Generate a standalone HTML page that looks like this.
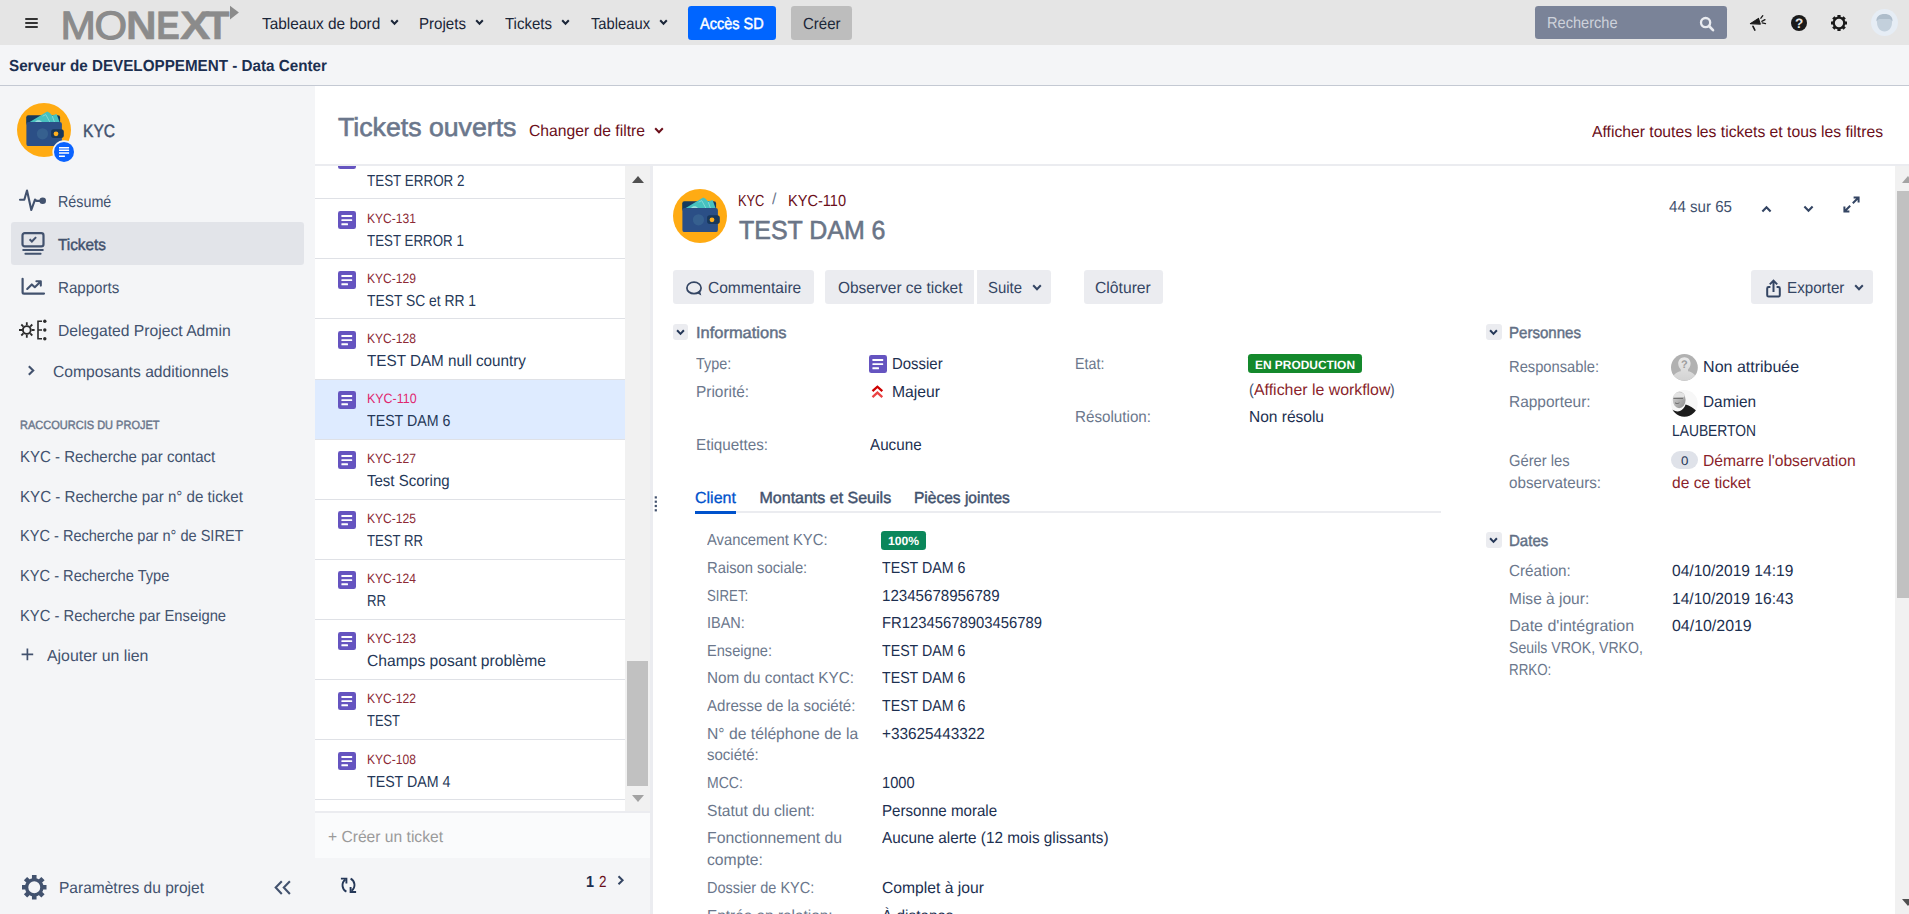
<!DOCTYPE html>
<html lang="fr">
<head>
<meta charset="utf-8">
<title>[KYC-110] TEST DAM 6 - Tickets ouverts</title>
<style>
*{box-sizing:border-box}
html,body{margin:0;padding:0}
body{width:1909px;height:914px;overflow:hidden;background:#fff;font-family:"Liberation Sans",sans-serif;position:relative;color:#172b4d;text-rendering:geometricPrecision}
.t{position:absolute;white-space:nowrap;display:block;transform-origin:0 50%}
.abs,.ti,svg.i{position:absolute}
svg{display:block;overflow:visible}
#hdr{position:absolute;left:0;top:0;width:1909px;height:45px;background:#e5e5e5}
#banner{position:absolute;left:0;top:45px;width:1909px;height:41px;background:#f4f5f7;border-bottom:1px solid #c4c9d3}
#side{position:absolute;left:0;top:86px;width:315px;height:828px;background:#f4f5f7}
.btnp{position:absolute;top:6px;height:33.5px;border-radius:3.3px}
.b{position:absolute;top:270px;height:33.7px;background:#ebecf0;border-radius:3.3px}
.tg{position:absolute;width:15.5px;height:16px;background:#ebecf0;border-radius:3px}
#list{position:absolute;left:315px;top:166px;width:310px;height:645.5px;overflow:hidden;background:#fff}
#list .row{position:absolute;left:0;width:310px;height:60.1px;border-top:1px solid #dfe1e6}
#list .row.sel{background:#deebff}
.loz{position:absolute;border-radius:3.3px}
</style>
</head>
<body>

<header id="hdr">
  <!-- hamburger -->
  <div class="abs" style="left:24.6px;top:17.5px;width:13.8px;height:2px;background:#333;border-radius:1px"></div>
  <div class="abs" style="left:24.6px;top:21.9px;width:13.8px;height:2px;background:#333;border-radius:1px"></div>
  <div class="abs" style="left:24.6px;top:26.4px;width:13.8px;height:2px;background:#333;border-radius:1px"></div>
  <!-- logo -->
  <svg class="i" style="left:60px;top:0" width="185" height="45" viewBox="60 0 185 45" font-family="Liberation Sans, sans-serif" font-size="39.6" fill="#8b8b8b" stroke="#8b8b8b" stroke-linejoin="miter">
    <text x="60.4" y="39" stroke-width="1.1" textLength="35.4" lengthAdjust="spacingAndGlyphs">M</text>
    <text x="94.6" y="39.3" stroke-width="1.1" textLength="32.6" lengthAdjust="spacingAndGlyphs">O</text>
    <g font-weight="700" stroke-width=".5">
    <text x="126" y="39" textLength="30.6" lengthAdjust="spacingAndGlyphs">N</text>
    <text x="156.2" y="39" textLength="23.6" lengthAdjust="spacingAndGlyphs">E</text>
    <text x="180" y="39" textLength="30.4" lengthAdjust="spacingAndGlyphs">X</text>
    <text x="205.4" y="39" textLength="24" lengthAdjust="spacingAndGlyphs">T</text>
    </g>
    <polygon points="230,5.8 238.9,12.6 230,19.5" stroke="none"/>
  </svg>
  <!-- nav chevrons -->
  <svg class="i" style="left:389.5px;top:18.6px" width="9" height="7" viewBox="0 0 9 7"><path d="M1.2 1.3 4.5 4.8 7.8 1.3" fill="none" stroke="#1b2638" stroke-width="2"/></svg>
  <svg class="i" style="left:475.2px;top:18.6px" width="9" height="7" viewBox="0 0 9 7"><path d="M1.2 1.3 4.5 4.8 7.8 1.3" fill="none" stroke="#1b2638" stroke-width="2"/></svg>
  <svg class="i" style="left:561px;top:18.6px" width="9" height="7" viewBox="0 0 9 7"><path d="M1.2 1.3 4.5 4.8 7.8 1.3" fill="none" stroke="#1b2638" stroke-width="2"/></svg>
  <svg class="i" style="left:659px;top:18.6px" width="9" height="7" viewBox="0 0 9 7"><path d="M1.2 1.3 4.5 4.8 7.8 1.3" fill="none" stroke="#1b2638" stroke-width="2"/></svg>
  <div class="btnp" style="left:688px;width:88px;background:#0065ff"></div>
  <div class="btnp" style="left:791px;width:61px;background:#bdbdbd"></div>
  <!-- search -->
  <div class="abs" style="left:1535px;top:6px;width:192px;height:33px;background:#7a8398;border-radius:3.3px"></div>
  <svg class="i" style="left:1699px;top:15.5px" width="16" height="16" viewBox="0 0 16 16"><circle cx="6.6" cy="6.6" r="4.6" fill="none" stroke="#e9ebf0" stroke-width="2.3"/><path d="M10 10l4 4.2" stroke="#e9ebf0" stroke-width="2.6" stroke-linecap="round"/></svg>
  <!-- megaphone -->
  <svg class="i" style="left:1749px;top:14px" width="19" height="18" viewBox="0 0 19 18"><path d="M1.400 9.600 9.500 4.400 11.300 10.100Z" fill="#1a1a1a" stroke="#1a1a1a" stroke-width="1.100" stroke-linejoin="round"/><path d="M4 12.300 5.800 16" stroke="#1a1a1a" stroke-width="1.700" stroke-linecap="round"/><path d="M11.900 4.200 13.800 1.700M12.800 7.300 16 5.700M13.200 8.800 16.500 9.600" stroke="#1a1a1a" stroke-width="1.300" stroke-linecap="round"/></svg>
  <!-- help -->
  <svg class="i" style="left:1790.800px;top:14.800px" width="16" height="16" viewBox="0 0 16 16"><circle cx="8" cy="8" r="8" fill="#1a1a1a"/><text x="8" y="12.7" text-anchor="middle" font-family="Liberation Sans, sans-serif" font-weight="700" font-size="13.5" fill="#e5e5e5">?</text></svg>
  <!-- gear -->
  <svg class="i" style="left:1831.200px;top:15px" width="16" height="16" viewBox="0 0 16 16"><circle cx="8" cy="8" r="5.300" fill="none" stroke="#1a1a1a" stroke-width="2.300"/><g stroke="#1a1a1a" stroke-width="3.200"><path d="M8 0v2.6M8 13.4V16M0 8h2.6M13.4 8H16M2.3 2.3l1.9 1.9M11.8 11.8l1.9 1.9M2.3 13.7l1.9-1.9M11.8 4.2l1.9-1.9"/></g></svg>
  <!-- avatar -->
  <svg class="i" style="left:1871px;top:8.6px" width="27" height="27" viewBox="0 0 27 27"><defs><clipPath id="avc"><circle cx="13.5" cy="13.5" r="13.5"/></clipPath></defs><circle cx="13.5" cy="13.5" r="13.5" fill="#e6edf5"/><g clip-path="url(#avc)"><path d="M6 13.5c0 5 3.2 9 7.5 9s7.500-4 7.500-9V10H6z" fill="#c3d0dc"/><path d="M5.500 12.500C5 7.500 8.500 5 13.500 5s8.500 2.500 8 7.500c-1-1.800-2-2.600-3-2.600H8.500c-1 0-2 .8-3 2.600z" fill="#aebdcb"/></g></svg>
</header>

<div id="banner"></div>

<aside id="side">
  <!-- project avatar -->
  <svg class="i" style="left:17px;top:16.800px" width="60" height="62" viewBox="0 0 60 62">
    <circle cx="27" cy="27" r="27" fill="#ffab13"/>
    <rect x="9.200" y="12.200" width="33.900" height="10" rx="2.200" fill="#173a5e"/>
    <path d="M12.300 19.200 30.200 8.400 32.600 9.800 35.200 12.400 39.600 11.100 42.600 19.200z" fill="#47c1bf"/>
    <path d="M18 19.200c1.400-2.400 5.400-2.600 7-.0z" fill="#9fe0dc"/>
    <path d="M25.600 13.200 28.800 11.600 32.800 19M35.200 12.800 37.400 19" fill="none" stroke="#8fdcd9" stroke-width=".8"/>
    <rect x="9.400" y="18.900" width="35.500" height="24.200" rx="2.200" fill="#2b4f86"/>
    <circle cx="25.500" cy="30.800" r="5.600" fill="#36608f"/>
    <rect x="34.100" y="26.300" width="12.700" height="8.600" rx="2.600" fill="#17375a"/>
    <circle cx="39" cy="30.800" r="2.400" fill="#ffb01f"/>
    <circle cx="47" cy="48.900" r="11.600" fill="#f4f5f7"/>
    <circle cx="47" cy="48.900" r="10" fill="#0a63ff"/>
    <g stroke="#fff" stroke-width="1.450"><path d="M42 44.650h10.100M42 47.300h10.100M42 50.050h10.100M42 53.150h5.900"/></g>
  </svg>
  <!-- selected item bg -->
  <div class="abs" style="left:11px;top:136px;width:293px;height:43px;background:#e2e4e9;border-radius:3.3px"></div>
  <!-- Résumé icon -->
  <svg class="i" style="left:19px;top:102.200px" width="28" height="25" viewBox="0 0 28 25"><path d="M1 11.800h4.300L8 2.500l4.300 19.500 3.700-10.400 1.700 1.300h3" fill="none" stroke="#42526e" stroke-width="2.100" stroke-linejoin="round" stroke-linecap="round"/><circle cx="23.700" cy="12.700" r="3.300" fill="#42526e"/></svg>
  <!-- Tickets icon -->
  <svg class="i" style="left:21px;top:146px" width="24" height="23" viewBox="0 0 24 23"><rect x="1.500" y="1.200" width="21" height="13.200" rx="2.200" fill="none" stroke="#42526e" stroke-width="2.200"/><path d="M8.600 7.200l2.300 2.300 4.200-4.400" fill="none" stroke="#42526e" stroke-width="2"/><path d="M2.200 18h19.600M4.400 21.800h15.200" stroke="#42526e" stroke-width="2" stroke-linecap="round"/></svg>
  <!-- Rapports icon -->
  <svg class="i" style="left:21px;top:192px" width="24" height="17" viewBox="0 0 24 17"><path d="M1.600 .8v13.400a1.400 1.400 0 0 0 1.400 1.400h20" fill="none" stroke="#42526e" stroke-width="2.200" stroke-linecap="round"/><path d="M6.200 11l4.600-4.600 3 2.800 5.600-5.400M15.400 3.200h4.400v4.400" fill="none" stroke="#42526e" stroke-width="2.100" stroke-linejoin="round" stroke-linecap="round"/></svg>
  <!-- Delegated icon -->
  <svg class="i" style="left:19px;top:233px" width="28" height="22" viewBox="0 0 28 22"><circle cx="7.800" cy="11" r="3.900" fill="none" stroke="#2b2b2b" stroke-width="1.900"/><g stroke="#2b2b2b" stroke-width="1.800"><path d="M7.800 3.200v3M7.800 15.800v3M0 11h3M12.600 11h3M2.300 5.500l2.100 2.100M11.200 14.400l2.100 2.100M2.300 16.500l2.100-2.100M11.200 7.600l2.100-2.100"/></g><path d="M23 2.200h-4v17.600h4M19 11h4" fill="none" stroke="#2b2b2b" stroke-width="1.600"/><circle cx="25.800" cy="2.200" r="1.700" fill="#2b2b2b"/><circle cx="25.800" cy="11" r="1.700" fill="#2b2b2b"/><circle cx="25.800" cy="19.800" r="1.700" fill="#2b2b2b"/></svg>
  <!-- chevron right -->
  <svg class="i" style="left:26.500px;top:279px" width="9" height="11" viewBox="0 0 9 11"><path d="M1.800 1.300 6.200 5.500 1.800 9.700" fill="none" stroke="#42526e" stroke-width="2.100"/></svg>
  <!-- plus -->
  <svg class="i" style="left:21px;top:561.500px" width="13" height="13" viewBox="0 0 13 13"><path d="M6.400 .6v11.600M.6 6.400h11.600" stroke="#42526e" stroke-width="1.700"/></svg>
  <!-- gear bottom -->
  <svg class="i" style="left:21.500px;top:788.500px" width="24.500" height="24.500" viewBox="0 0 16 16"><circle cx="8" cy="8" r="5" fill="none" stroke="#42526e" stroke-width="2.200"/><g stroke="#42526e" stroke-width="3"><path d="M8 0v2.600M8 13.400V16M0 8h2.600M13.400 8H16M2.300 2.300l1.900 1.900M11.800 11.800l1.900 1.900M2.300 13.700l1.900-1.900M11.800 4.200l1.900-1.900"/></g></svg>
  <!-- collapse -->
  <svg class="i" style="left:273.500px;top:793.500px" width="18" height="16" viewBox="0 0 18 16"><path d="M7.800 1.300 1.700 7.600l6.100 6.300M15.900 1.300 9.800 7.600l6.100 6.300" fill="none" stroke="#42526e" stroke-width="2.100"/></svg>
</aside>

<main>
  <!-- top border under heading -->
  <div class="abs" style="left:315px;top:164px;width:1594px;height:2px;background:#ebecf0"></div>
  <svg class="i" style="left:654px;top:126.600px" width="10" height="8" viewBox="0 0 10 8"><path d="M1.200 1.300 5 5.300 8.800 1.300" fill="none" stroke="#6b0f1a" stroke-width="2"/></svg>

  <section id="list">
<div class="row" style="top:-27.9px"></div>
<svg class="ti" style="left:23px;top:-15.3px" width="18" height="18" viewBox="0 0 18 18"><rect width="18" height="18" rx="2.3" fill="#6554c0"/><rect x="3.4" y="4.1" width="10.8" height="1.9" rx=".5" fill="#fff"/><rect x="3.4" y="8.2" width="10.8" height="1.9" rx=".5" fill="#fff"/><rect x="3.4" y="12.3" width="6.6" height="1.9" rx=".5" fill="#fff"/></svg>
<div class="row" style="top:32.2px"></div>
<svg class="ti" style="left:23px;top:44.8px" width="18" height="18" viewBox="0 0 18 18"><rect width="18" height="18" rx="2.3" fill="#6554c0"/><rect x="3.4" y="4.1" width="10.8" height="1.9" rx=".5" fill="#fff"/><rect x="3.4" y="8.2" width="10.8" height="1.9" rx=".5" fill="#fff"/><rect x="3.4" y="12.3" width="6.6" height="1.9" rx=".5" fill="#fff"/></svg>
<div class="row" style="top:92.3px"></div>
<svg class="ti" style="left:23px;top:104.9px" width="18" height="18" viewBox="0 0 18 18"><rect width="18" height="18" rx="2.3" fill="#6554c0"/><rect x="3.4" y="4.1" width="10.8" height="1.9" rx=".5" fill="#fff"/><rect x="3.4" y="8.2" width="10.8" height="1.9" rx=".5" fill="#fff"/><rect x="3.4" y="12.3" width="6.6" height="1.9" rx=".5" fill="#fff"/></svg>
<div class="row" style="top:152.4px"></div>
<svg class="ti" style="left:23px;top:165.0px" width="18" height="18" viewBox="0 0 18 18"><rect width="18" height="18" rx="2.3" fill="#6554c0"/><rect x="3.4" y="4.1" width="10.8" height="1.9" rx=".5" fill="#fff"/><rect x="3.4" y="8.2" width="10.8" height="1.9" rx=".5" fill="#fff"/><rect x="3.4" y="12.3" width="6.6" height="1.9" rx=".5" fill="#fff"/></svg>
<div class="row sel" style="top:212.5px"></div>
<svg class="ti" style="left:23px;top:225.1px" width="18" height="18" viewBox="0 0 18 18"><rect width="18" height="18" rx="2.3" fill="#6554c0"/><rect x="3.4" y="4.1" width="10.8" height="1.9" rx=".5" fill="#fff"/><rect x="3.4" y="8.2" width="10.8" height="1.9" rx=".5" fill="#fff"/><rect x="3.4" y="12.3" width="6.6" height="1.9" rx=".5" fill="#fff"/></svg>
<div class="row" style="top:272.6px"></div>
<svg class="ti" style="left:23px;top:285.2px" width="18" height="18" viewBox="0 0 18 18"><rect width="18" height="18" rx="2.3" fill="#6554c0"/><rect x="3.4" y="4.1" width="10.8" height="1.9" rx=".5" fill="#fff"/><rect x="3.4" y="8.2" width="10.8" height="1.9" rx=".5" fill="#fff"/><rect x="3.4" y="12.3" width="6.6" height="1.9" rx=".5" fill="#fff"/></svg>
<div class="row" style="top:332.7px"></div>
<svg class="ti" style="left:23px;top:345.3px" width="18" height="18" viewBox="0 0 18 18"><rect width="18" height="18" rx="2.3" fill="#6554c0"/><rect x="3.4" y="4.1" width="10.8" height="1.9" rx=".5" fill="#fff"/><rect x="3.4" y="8.2" width="10.8" height="1.9" rx=".5" fill="#fff"/><rect x="3.4" y="12.3" width="6.6" height="1.9" rx=".5" fill="#fff"/></svg>
<div class="row" style="top:392.8px"></div>
<svg class="ti" style="left:23px;top:405.4px" width="18" height="18" viewBox="0 0 18 18"><rect width="18" height="18" rx="2.3" fill="#6554c0"/><rect x="3.4" y="4.1" width="10.8" height="1.9" rx=".5" fill="#fff"/><rect x="3.4" y="8.2" width="10.8" height="1.9" rx=".5" fill="#fff"/><rect x="3.4" y="12.3" width="6.6" height="1.9" rx=".5" fill="#fff"/></svg>
<div class="row" style="top:452.9px"></div>
<svg class="ti" style="left:23px;top:465.5px" width="18" height="18" viewBox="0 0 18 18"><rect width="18" height="18" rx="2.3" fill="#6554c0"/><rect x="3.4" y="4.1" width="10.8" height="1.9" rx=".5" fill="#fff"/><rect x="3.4" y="8.2" width="10.8" height="1.9" rx=".5" fill="#fff"/><rect x="3.4" y="12.3" width="6.6" height="1.9" rx=".5" fill="#fff"/></svg>
<div class="row" style="top:513.0px"></div>
<svg class="ti" style="left:23px;top:525.6px" width="18" height="18" viewBox="0 0 18 18"><rect width="18" height="18" rx="2.3" fill="#6554c0"/><rect x="3.4" y="4.1" width="10.8" height="1.9" rx=".5" fill="#fff"/><rect x="3.4" y="8.2" width="10.8" height="1.9" rx=".5" fill="#fff"/><rect x="3.4" y="12.3" width="6.6" height="1.9" rx=".5" fill="#fff"/></svg>
<div class="row" style="top:573.1px"></div>
<svg class="ti" style="left:23px;top:585.7px" width="18" height="18" viewBox="0 0 18 18"><rect width="18" height="18" rx="2.3" fill="#6554c0"/><rect x="3.4" y="4.1" width="10.8" height="1.9" rx=".5" fill="#fff"/><rect x="3.4" y="8.2" width="10.8" height="1.9" rx=".5" fill="#fff"/><rect x="3.4" y="12.3" width="6.6" height="1.9" rx=".5" fill="#fff"/></svg>
<div class="row" style="top:633.2px"></div>
<svg class="ti" style="left:23px;top:645.8px" width="18" height="18" viewBox="0 0 18 18"><rect width="18" height="18" rx="2.3" fill="#6554c0"/><rect x="3.4" y="4.1" width="10.8" height="1.9" rx=".5" fill="#fff"/><rect x="3.4" y="8.2" width="10.8" height="1.9" rx=".5" fill="#fff"/><rect x="3.4" y="12.3" width="6.6" height="1.9" rx=".5" fill="#fff"/></svg>
<span class="t" style="left:52.2px;top:-16px;font-size:13.5px;line-height:17px;color:#8c2a35;transform:scaleX(0.8945)">KYC-132</span>
<span class="t" style="left:52.2px;top:6px;font-size:16px;line-height:19px;color:#253858;transform:scaleX(0.8393)">TEST ERROR 2</span>
<span class="t" style="left:52.2px;top:44px;font-size:13.5px;line-height:17px;color:#8c2a35;transform:scaleX(0.8945)">KYC-131</span>
<span class="t" style="left:52.2px;top:66px;font-size:16px;line-height:19px;color:#253858;transform:scaleX(0.8332)">TEST ERROR 1</span>
<span class="t" style="left:52.2px;top:104px;font-size:13.5px;line-height:17px;color:#8c2a35;transform:scaleX(0.8945)">KYC-129</span>
<span class="t" style="left:52.2px;top:126px;font-size:16px;line-height:19px;color:#253858;transform:scaleX(0.8653)">TEST SC et RR 1</span>
<span class="t" style="left:52.2px;top:164px;font-size:13.5px;line-height:17px;color:#8c2a35;transform:scaleX(0.8945)">KYC-128</span>
<span class="t" style="left:52.2px;top:186px;font-size:16px;line-height:19px;color:#253858;transform:scaleX(0.9528)">TEST DAM null country</span>
<span class="t" style="left:52.2px;top:224px;font-size:13.5px;line-height:17px;color:#e0266e;transform:scaleX(0.9223)">KYC-110</span>
<span class="t" style="left:52.2px;top:246px;font-size:16px;line-height:19px;color:#253858;transform:scaleX(0.8877)">TEST DAM 6</span>
<span class="t" style="left:52.2px;top:284px;font-size:13.5px;line-height:17px;color:#8c2a35;transform:scaleX(0.8945)">KYC-127</span>
<span class="t" style="left:52.2px;top:306px;font-size:16px;line-height:19px;color:#253858;transform:scaleX(0.9381)">Test Scoring</span>
<span class="t" style="left:52.2px;top:344px;font-size:13.5px;line-height:17px;color:#8c2a35;transform:scaleX(0.8945)">KYC-125</span>
<span class="t" style="left:52.2px;top:366px;font-size:16px;line-height:19px;color:#253858;transform:scaleX(0.8216)">TEST RR</span>
<span class="t" style="left:52.2px;top:404px;font-size:13.5px;line-height:17px;color:#8c2a35;transform:scaleX(0.8945)">KYC-124</span>
<span class="t" style="left:52.2px;top:426px;font-size:16px;line-height:19px;color:#253858;transform:scaleX(0.8222)">RR</span>
<span class="t" style="left:52.2px;top:464px;font-size:13.5px;line-height:17px;color:#8c2a35;transform:scaleX(0.8945)">KYC-123</span>
<span class="t" style="left:52.2px;top:486px;font-size:16px;line-height:19px;color:#253858;transform:scaleX(0.9770)">Champs posant problème</span>
<span class="t" style="left:52.2px;top:524px;font-size:13.5px;line-height:17px;color:#8c2a35;transform:scaleX(0.8945)">KYC-122</span>
<span class="t" style="left:52.2px;top:546px;font-size:16px;line-height:19px;color:#253858;transform:scaleX(0.8070)">TEST</span>
<span class="t" style="left:52.2px;top:585px;font-size:13.5px;line-height:17px;color:#8c2a35;transform:scaleX(0.8945)">KYC-108</span>
<span class="t" style="left:52.2px;top:607px;font-size:16px;line-height:19px;color:#253858;transform:scaleX(0.8877)">TEST DAM 4</span>
<span class="t" style="left:52.2px;top:645px;font-size:13.5px;line-height:17px;color:#8c2a35;transform:scaleX(0.8945)">KYC-107</span>
<span class="t" style="left:52.2px;top:667px;font-size:16px;line-height:19px;color:#253858;transform:scaleX(0.8877)">TEST DAM 3</span>
  </section>
  <!-- list scrollbar -->
  <div class="abs" style="left:625px;top:166px;width:25px;height:645.500px;background:#f1f1f1"></div>
  <svg class="i" style="left:631.500px;top:175.500px" width="12" height="7" viewBox="0 0 12 7"><path d="M0 7 6 0l6 7z" fill="#505050"/></svg>
  <div class="abs" style="left:627px;top:661px;width:21px;height:125px;background:#c1c1c1"></div>
  <svg class="i" style="left:631.500px;top:794.800px" width="12" height="7" viewBox="0 0 12 7"><path d="M0 0h12L6 7z" fill="#a3a3a3"/></svg>
  <!-- create row + footer -->
  <div class="abs" style="left:315px;top:811px;width:335px;height:47px;background:#fafbfc;border-top:2px solid #ebecf0"></div>
  <div class="abs" style="left:315px;top:858px;width:335px;height:56px;background:#f4f5f7"></div>
  <svg class="i" style="left:339.500px;top:876.500px" width="17" height="17" viewBox="0 0 17 17"><g fill="none" stroke="#253858" stroke-width="1.900"><path d="M6.400 14.700C2 12.600.9 6.200 5.400 2.600"/><path d="M.9 1.600h5.500v5"/><path d="M10.600 1.700c4.400 2.100 5.500 8.500 1 12.100"/><path d="M16.100 15h-5.500v-5"/></g></svg>
  <svg class="i" style="left:617px;top:875.300px" width="8" height="11" viewBox="0 0 8 11"><path d="M1.500 1.300 5.600 5.300 1.500 9.300" fill="none" stroke="#344563" stroke-width="2"/></svg>
  <!-- vertical splitter -->
  <div class="abs" style="left:650px;top:166px;width:2.600px;height:748px;background:#ebecf0"></div>
  <svg class="i" style="left:654.400px;top:496px" width="4" height="16" viewBox="0 0 4 16"><g fill="#42526e"><rect x=".7" y=".3" width="2.200" height="2.200"/><rect x=".7" y="4.600" width="2.200" height="2.200"/><rect x=".7" y="8.900" width="2.200" height="2.200"/><rect x=".7" y="13.200" width="2.200" height="2.200"/></g></svg>

  <!-- detail avatar -->
  <svg class="i" style="left:673px;top:188.800px" width="54" height="54" viewBox="0 0 54 54">
    <circle cx="27" cy="27" r="27" fill="#ffab13"/>
    <rect x="9.200" y="12.200" width="33.900" height="10" rx="2.200" fill="#173a5e"/>
    <path d="M12.300 19.200 30.200 8.400 32.600 9.800 35.200 12.400 39.600 11.100 42.600 19.200z" fill="#47c1bf"/>
    <path d="M18 19.200c1.400-2.400 5.400-2.600 7-.0z" fill="#9fe0dc"/>
    <path d="M25.600 13.200 28.800 11.600 32.800 19M35.200 12.800 37.400 19" fill="none" stroke="#8fdcd9" stroke-width=".8"/>
    <rect x="9.400" y="18.900" width="35.500" height="24.200" rx="2.200" fill="#2b4f86"/>
    <circle cx="25.500" cy="30.800" r="5.600" fill="#36608f"/>
    <rect x="34.100" y="26.300" width="12.700" height="8.600" rx="2.600" fill="#17375a"/>
    <circle cx="39" cy="30.800" r="2.400" fill="#ffb01f"/>
  </svg>
  

  <!-- pager arrows -->
  <svg class="i" style="left:1760.500px;top:204.500px" width="11" height="8" viewBox="0 0 11 8"><path d="M1.400 6.500 5.500 2.200l4.100 4.300" fill="none" stroke="#344563" stroke-width="2.100"/></svg>
  <svg class="i" style="left:1803px;top:204.500px" width="11" height="8" viewBox="0 0 11 8"><path d="M1.400 1.500 5.500 5.800l4.100-4.300" fill="none" stroke="#344563" stroke-width="2.100"/></svg>
  <svg class="i" style="left:1843px;top:195.500px" width="17" height="17" viewBox="0 0 17 17"><path d="M9.800 7.200 15 2M10.600 1.400h5v5M7.200 9.800 2 15M1.400 10.600v5h5" fill="none" stroke="#344563" stroke-width="2"/></svg>

  <!-- buttons -->
  <div class="b" style="left:673px;width:141px"></div>
  <div class="b" style="left:825.200px;width:148.600px;border-radius:3.3px 0 0 3.3px"></div>
  <div class="b" style="left:977px;width:74px;border-radius:0 3.3px 3.3px 0"></div>
  <div class="b" style="left:1084px;width:79px"></div>
  <div class="b" style="left:1751px;width:122px"></div>
  <svg class="i" style="left:685px;top:279.500px" width="18" height="17" viewBox="0 0 18 17"><ellipse cx="9" cy="7.900" rx="7.100" ry="5.750" fill="none" stroke="#344563" stroke-width="1.700"/><path d="M11.600 12.900 16.300 15.500 14.900 10.600z" fill="#344563"/></svg>
  <svg class="i" style="left:1032px;top:283.500px" width="10" height="8" viewBox="0 0 10 8"><path d="M1.200 1.300 5 5.300 8.800 1.300" fill="none" stroke="#344563" stroke-width="2"/></svg>
  <svg class="i" style="left:1853.500px;top:283.500px" width="10" height="8" viewBox="0 0 10 8"><path d="M1.200 1.300 5 5.300 8.800 1.300" fill="none" stroke="#344563" stroke-width="2"/></svg>
  <svg class="i" style="left:1765.500px;top:278.500px" width="15" height="19" viewBox="0 0 15 19"><path d="M4.400 8H2.600a1.400 1.400 0 0 0-1.400 1.400v6.800a1.400 1.400 0 0 0 1.400 1.400h9.800a1.400 1.400 0 0 0 1.400-1.400V9.400A1.400 1.400 0 0 0 12.400 8h-1.800" fill="none" stroke="#344563" stroke-width="2"/><path d="M7.500 13V2.200M3.800 5.400 7.500 1.600l3.700 3.800" fill="none" stroke="#344563" stroke-width="2"/></svg>

  <!-- section toggles -->
  <div class="tg" style="left:672.800px;top:324px"></div>
  <div class="tg" style="left:1486px;top:324px"></div>
  <div class="tg" style="left:1486px;top:532px"></div>
  <svg class="i" style="left:676px;top:328.500px" width="9" height="7" viewBox="0 0 9 7"><path d="M1.100 1.300 4.500 4.900 7.900 1.300" fill="none" stroke="#253858" stroke-width="2"/></svg>
  <svg class="i" style="left:1489.200px;top:328.500px" width="9" height="7" viewBox="0 0 9 7"><path d="M1.100 1.300 4.500 4.900 7.900 1.300" fill="none" stroke="#253858" stroke-width="2"/></svg>
  <svg class="i" style="left:1489.200px;top:536.500px" width="9" height="7" viewBox="0 0 9 7"><path d="M1.100 1.300 4.500 4.900 7.900 1.300" fill="none" stroke="#253858" stroke-width="2"/></svg>

  <!-- type + priority icons -->
<svg class="ti" style="left:869px;top:354.8px" width="18" height="18" viewBox="0 0 18 18"><rect width="18" height="18" rx="2.3" fill="#6554c0"/><rect x="3.4" y="4.1" width="10.8" height="1.9" rx=".5" fill="#fff"/><rect x="3.4" y="8.2" width="10.8" height="1.9" rx=".5" fill="#fff"/><rect x="3.4" y="12.3" width="6.6" height="1.9" rx=".5" fill="#fff"/></svg>
  <svg class="i" style="left:871.300px;top:384.900px" width="13" height="14" viewBox="0 0 13 14"><path d="M1.500 6.200 6.400 1.700l4.900 4.500" fill="none" stroke="#ce0000" stroke-width="2.300"/><path d="M1.500 12.100 6.400 7.600l4.900 4.500" fill="none" stroke="#ea4444" stroke-width="2.300"/></svg>

  <!-- lozenges -->
  <div class="loz" style="left:1248px;top:354px;width:114px;height:18.800px;background:#14892c"></div>
  <div class="loz" style="left:881px;top:530.800px;width:45px;height:18.900px;background:#0b875b"></div>

  <!-- tabs -->
  <div class="abs" style="left:695px;top:511.300px;width:746px;height:2.200px;background:#ebecf0"></div>
  <div class="abs" style="left:695px;top:510.500px;width:41px;height:3.300px;background:#0052cc"></div>

  <!-- people -->
  <svg class="i" style="left:1671px;top:353.800px" width="26.800" height="26.800" viewBox="0 0 26.800 26.800"><defs><clipPath id="uc"><circle cx="13.400" cy="13.400" r="13.400"/></clipPath><linearGradient id="ug" x1="0" y1="0" x2="0" y2="1"><stop offset="0" stop-color="#e9e9e9"/><stop offset="1" stop-color="#d2d2d2"/></linearGradient></defs><circle cx="13.400" cy="13.400" r="13.400" fill="#b1b1b1"/><g clip-path="url(#uc)"><path d="M13.400 3.200c3.600 0 6.200 2.800 6.200 6.400 0 2.600-1.200 4.600-2.600 5.800v1.800c4.400.8 8.200 3 8.600 9.600H1.200c.4-6.600 4.200-8.800 8.600-9.600v-1.800C8.400 14.200 7.200 12.200 7.200 9.600c0-3.600 2.600-6.400 6.200-6.400z" fill="url(#ug)"/></g><text x="13.400" y="13.700" text-anchor="middle" font-family="Liberation Sans, sans-serif" font-weight="700" font-size="11" fill="#9c9c9c">?</text></svg>
  <svg class="i" style="left:1671px;top:389.800px" width="26.800" height="26.800" viewBox="0 0 26.800 26.800"><defs><clipPath id="dc"><circle cx="13.400" cy="13.400" r="13.400"/></clipPath><linearGradient id="dg" x1="0" y1="0" x2="1" y2="1"><stop offset="0" stop-color="#d9d9d9"/><stop offset="1" stop-color="#8d8d8d"/></linearGradient></defs><g clip-path="url(#dc)"><rect width="26.800" height="26.800" fill="#f7f7f7"/><ellipse cx="8.200" cy="9.800" rx="6.400" ry="8.400" fill="url(#dg)"/><path d="M2 4.800c1.500-3 8-4 12 0l-1 2.400H2.600z" fill="#e3e3e3"/><path d="M2.400 8.400h9.600M4 12.800c1.400 1 3 1 4.400 0" stroke="#6a6a6a" stroke-width="1" fill="none"/><path d="M.8 19.500c2.500 1.500 5.500 2.500 8.200 1.500 2.400-1 4.600-3.500 5.600-6.500 4 1.200 8 3.500 10.400 6L22 27H3z" fill="#1c1c1c"/></g></svg>
  <div class="abs" style="left:1671px;top:451px;width:27px;height:17.800px;background:#dfe2e9;border-radius:9px"></div>

  <!-- page scrollbar (right, clipped) -->
  <div class="abs" style="left:1895.200px;top:166px;width:14px;height:748px;background:#f1f1f1"></div>
  <svg class="i" style="left:1901.800px;top:175.500px" width="12" height="7" viewBox="0 0 12 7"><path d="M0 7 6 0l6 7z" fill="#a3a3a3"/></svg>
  <div class="abs" style="left:1897.200px;top:191px;width:12px;height:406.500px;background:#c1c1c1"></div>
  <svg class="i" style="left:1901.800px;top:899px" width="12" height="7" viewBox="0 0 12 7"><path d="M0 0h12L6 7z" fill="#505050"/></svg>
</main>

<span class="t" style="left:261.5px;top:15px;font-size:16px;line-height:19px;color:#1b2638;transform:scaleX(0.9636)">Tableaux de bord</span>
<span class="t" style="left:418.7px;top:15px;font-size:16px;line-height:19px;color:#1b2638;transform:scaleX(0.9438)">Projets</span>
<span class="t" style="left:504.8px;top:15px;font-size:16px;line-height:19px;color:#1b2638;transform:scaleX(0.9385)">Tickets</span>
<span class="t" style="left:590.6px;top:15px;font-size:16px;line-height:19px;color:#1b2638;transform:scaleX(0.9212)">Tableaux</span>
<span class="t" style="left:700.0px;top:15px;font-size:16px;line-height:19px;color:#ffffff;transform:scaleX(0.9053);-webkit-text-stroke:.45px">Accès SD</span>
<span class="t" style="left:802.5px;top:15px;font-size:16px;line-height:19px;color:#1b2638;transform:scaleX(0.9371)">Créer</span>
<span class="t" style="left:1547.2px;top:14px;font-size:16px;line-height:19px;color:#ced2db;transform:scaleX(0.9111)">Recherche</span>
<span class="t" style="left:9.3px;top:57px;font-size:16px;line-height:19px;color:#1c2f50;transform:scaleX(0.9512);font-weight:700">Serveur de DEVELOPPEMENT - Data Center</span>
<span class="t" style="left:83.1px;top:120px;font-size:18px;line-height:22px;color:#42526e;transform:scaleX(0.8645);-webkit-text-stroke:.45px">KYC</span>
<span class="t" style="left:58.4px;top:193px;font-size:16px;line-height:19px;color:#42526e;transform:scaleX(0.8946)">Résumé</span>
<span class="t" style="left:58.4px;top:236px;font-size:16px;line-height:19px;color:#42526e;transform:scaleX(0.9585);-webkit-text-stroke:.45px">Tickets</span>
<span class="t" style="left:58.4px;top:279px;font-size:16px;line-height:19px;color:#42526e;transform:scaleX(0.9442)">Rapports</span>
<span class="t" style="left:58.4px;top:322px;font-size:16px;line-height:19px;color:#42526e;transform:scaleX(0.9801)">Delegated Project Admin</span>
<span class="t" style="left:53.3px;top:363px;font-size:16px;line-height:19px;color:#42526e;transform:scaleX(0.9773)">Composants additionnels</span>
<span class="t" style="left:19.9px;top:417px;font-size:12px;line-height:16px;color:#6b778c;transform:scaleX(0.9183);-webkit-text-stroke:.45px">RACCOURCIS DU PROJET</span>
<span class="t" style="left:19.9px;top:448px;font-size:16px;line-height:19px;color:#42526e;transform:scaleX(0.9385)">KYC - Recherche par contact</span>
<span class="t" style="left:19.9px;top:488px;font-size:16px;line-height:19px;color:#42526e;transform:scaleX(0.9451)">KYC - Recherche par n° de ticket</span>
<span class="t" style="left:19.9px;top:527px;font-size:16px;line-height:19px;color:#42526e;transform:scaleX(0.9100)">KYC - Recherche par n° de SIRET</span>
<span class="t" style="left:19.9px;top:567px;font-size:16px;line-height:19px;color:#42526e;transform:scaleX(0.9146)">KYC - Recherche Type</span>
<span class="t" style="left:19.9px;top:607px;font-size:16px;line-height:19px;color:#42526e;transform:scaleX(0.9232)">KYC - Recherche par Enseigne</span>
<span class="t" style="left:46.8px;top:647px;font-size:16px;line-height:19px;color:#42526e;transform:scaleX(0.9912)">Ajouter un lien</span>
<span class="t" style="left:59.0px;top:879px;font-size:16px;line-height:19px;color:#42526e;transform:scaleX(0.9705)">Paramètres du projet</span>
<span class="t" style="left:338.0px;top:111px;font-size:26px;line-height:32px;color:#6b778c;transform:scaleX(1.0260);-webkit-text-stroke:.6px">Tickets ouverts</span>
<span class="t" style="left:529.4px;top:122px;font-size:16px;line-height:19px;color:#6b0f1a;transform:scaleX(0.9806)">Changer de filtre</span>
<span class="t" style="left:1591.5px;top:123px;font-size:16px;line-height:19px;color:#6b0f1a;transform:scaleX(0.9807)">Afficher toutes les tickets et tous les filtres</span>
<span class="t" style="left:327.8px;top:828px;font-size:16px;line-height:19px;color:#9a9a9a;transform:scaleX(0.9760)">+ Créer un ticket</span>
<span class="t" style="left:585.6px;top:873px;font-size:16px;line-height:19px;color:#1c2f50;transform:scaleX(0.9000);font-weight:700">1</span>
<span class="t" style="left:598.8px;top:873px;font-size:16px;line-height:19px;color:#6b0f1a;transform:scaleX(0.8421)">2</span>
<span class="t" style="left:738.3px;top:192px;font-size:16px;line-height:19px;color:#6b0f1a;transform:scaleX(0.8023)">KYC</span>
<span class="t" style="left:788.2px;top:192px;font-size:16px;line-height:19px;color:#6b0f1a;transform:scaleX(0.9100)">KYC-110</span>
<span class="t" style="left:771.8px;top:190px;font-size:16px;line-height:19px;color:#6b778c;transform:scaleX(0.9881)">/</span>
<span class="t" style="left:738.6px;top:214px;font-size:26px;line-height:32px;color:#6a7587;transform:scaleX(0.9596);-webkit-text-stroke:.6px">TEST DAM 6</span>
<span class="t" style="left:1669.4px;top:198px;font-size:16px;line-height:19px;color:#42526e;transform:scaleX(0.9443)">44 sur 65</span>
<span class="t" style="left:707.7px;top:279px;font-size:16px;line-height:19px;color:#344563;transform:scaleX(0.9705)">Commentaire</span>
<span class="t" style="left:837.6px;top:279px;font-size:16px;line-height:19px;color:#344563;transform:scaleX(0.9656)">Observer ce ticket</span>
<span class="t" style="left:988.3px;top:279px;font-size:16px;line-height:19px;color:#344563;transform:scaleX(0.9323)">Suite</span>
<span class="t" style="left:1095.2px;top:279px;font-size:16px;line-height:19px;color:#344563;transform:scaleX(0.9806)">Clôturer</span>
<span class="t" style="left:1787.1px;top:279px;font-size:16px;line-height:19px;color:#344563;transform:scaleX(0.9493)">Exporter</span>
<span class="t" style="left:695.5px;top:324px;font-size:16px;line-height:19px;color:#626f85;transform:scaleX(1.0279);-webkit-text-stroke:.45px">Informations</span>
<span class="t" style="left:1509.2px;top:324px;font-size:16px;line-height:19px;color:#626f85;transform:scaleX(0.9412);-webkit-text-stroke:.45px">Personnes</span>
<span class="t" style="left:1509.2px;top:532px;font-size:16px;line-height:19px;color:#626f85;transform:scaleX(0.9403);-webkit-text-stroke:.45px">Dates</span>
<span class="t" style="left:695.5px;top:355px;font-size:16px;line-height:19px;color:#6b778c;transform:scaleX(0.8993)">Type:</span>
<span class="t" style="left:892.3px;top:355px;font-size:16px;line-height:19px;color:#1c2f50;transform:scaleX(0.9330)">Dossier</span>
<span class="t" style="left:695.5px;top:383px;font-size:16px;line-height:19px;color:#6b778c;transform:scaleX(0.9633)">Priorité:</span>
<span class="t" style="left:892.3px;top:383px;font-size:16px;line-height:19px;color:#1c2f50;transform:scaleX(0.9815)">Majeur</span>
<span class="t" style="left:695.5px;top:436px;font-size:16px;line-height:19px;color:#6b778c;transform:scaleX(0.9523)">Etiquettes:</span>
<span class="t" style="left:869.9px;top:436px;font-size:16px;line-height:19px;color:#1c2f50;transform:scaleX(0.9509)">Aucune</span>
<span class="t" style="left:1074.5px;top:355px;font-size:16px;line-height:19px;color:#6b778c;transform:scaleX(0.8934)">Etat:</span>
<span class="t" style="left:1255.1px;top:357px;font-size:12px;line-height:16px;color:#ffffff;transform:scaleX(0.9933);font-weight:700">EN PRODUCTION</span>
<span class="t" style="left:1248.9px;top:381px;font-size:16px;line-height:19px;color:#42526e;transform:scaleX(0.9009)">(</span>
<span class="t" style="left:1253.7px;top:381px;font-size:16px;line-height:19px;color:#8a1f2b;transform:scaleX(0.9918)">Afficher le workflow</span>
<span class="t" style="left:1390.1px;top:381px;font-size:16px;line-height:19px;color:#42526e;transform:scaleX(0.8633)">)</span>
<span class="t" style="left:1074.5px;top:408px;font-size:16px;line-height:19px;color:#6b778c;transform:scaleX(0.9494)">Résolution:</span>
<span class="t" style="left:1249.0px;top:408px;font-size:16px;line-height:19px;color:#1c2f50;transform:scaleX(0.9693)">Non résolu</span>
<span class="t" style="left:695.0px;top:489px;font-size:16px;line-height:19px;color:#0052cc;-webkit-text-stroke:.3px">Client</span>
<span class="t" style="left:759.5px;top:489px;font-size:16px;line-height:19px;color:#42526e;-webkit-text-stroke:.45px">Montants et Seuils</span>
<span class="t" style="left:914.2px;top:489px;font-size:16px;line-height:19px;color:#42526e;transform:scaleX(0.9704);-webkit-text-stroke:.45px">Pièces jointes</span>
<span class="t" style="left:706.8px;top:531px;font-size:16px;line-height:19px;color:#6b778c;transform:scaleX(0.9238)">Avancement KYC:</span>
<span class="t" style="left:888.0px;top:533px;font-size:12px;line-height:16px;color:#ffffff;transform:scaleX(1.0097);font-weight:700">100%</span>
<span class="t" style="left:706.8px;top:559px;font-size:16px;line-height:19px;color:#6b778c;transform:scaleX(0.9235)">Raison sociale:</span>
<span class="t" style="left:881.5px;top:559px;font-size:16px;line-height:19px;color:#1c2f50;transform:scaleX(0.8877)">TEST DAM 6</span>
<span class="t" style="left:706.8px;top:587px;font-size:16px;line-height:19px;color:#6b778c;transform:scaleX(0.8274)">SIRET:</span>
<span class="t" style="left:881.5px;top:587px;font-size:16px;line-height:19px;color:#1c2f50;transform:scaleX(0.9440)">12345678956789</span>
<span class="t" style="left:706.8px;top:614px;font-size:16px;line-height:19px;color:#6b778c;transform:scaleX(0.9044)">IBAN:</span>
<span class="t" style="left:881.5px;top:614px;font-size:16px;line-height:19px;color:#1c2f50;transform:scaleX(0.9269)">FR12345678903456789</span>
<span class="t" style="left:706.8px;top:642px;font-size:16px;line-height:19px;color:#6b778c;transform:scaleX(0.9133)">Enseigne:</span>
<span class="t" style="left:881.5px;top:642px;font-size:16px;line-height:19px;color:#1c2f50;transform:scaleX(0.8877)">TEST DAM 6</span>
<span class="t" style="left:706.8px;top:669px;font-size:16px;line-height:19px;color:#6b778c;transform:scaleX(0.9555)">Nom du contact KYC:</span>
<span class="t" style="left:881.5px;top:669px;font-size:16px;line-height:19px;color:#1c2f50;transform:scaleX(0.8877)">TEST DAM 6</span>
<span class="t" style="left:706.8px;top:697px;font-size:16px;line-height:19px;color:#6b778c;transform:scaleX(0.9427)">Adresse de la société:</span>
<span class="t" style="left:881.5px;top:697px;font-size:16px;line-height:19px;color:#1c2f50;transform:scaleX(0.8877)">TEST DAM 6</span>
<span class="t" style="left:706.8px;top:725px;font-size:16px;line-height:19px;color:#6b778c;transform:scaleX(0.9813)">N° de téléphone de la</span>
<span class="t" style="left:881.5px;top:725px;font-size:16px;line-height:19px;color:#1c2f50;transform:scaleX(0.9586)">+33625443322</span>
<span class="t" style="left:706.8px;top:746px;font-size:16px;line-height:19px;color:#6b778c;transform:scaleX(0.9376)">société:</span>
<span class="t" style="left:706.8px;top:774px;font-size:16px;line-height:19px;color:#6b778c;transform:scaleX(0.8780)">MCC:</span>
<span class="t" style="left:881.5px;top:774px;font-size:16px;line-height:19px;color:#1c2f50;transform:scaleX(0.9131)">1000</span>
<span class="t" style="left:706.8px;top:802px;font-size:16px;line-height:19px;color:#6b778c;transform:scaleX(0.9774)">Statut du client:</span>
<span class="t" style="left:881.5px;top:802px;font-size:16px;line-height:19px;color:#1c2f50;transform:scaleX(0.9447)">Personne morale</span>
<span class="t" style="left:706.8px;top:829px;font-size:16px;line-height:19px;color:#6b778c;transform:scaleX(0.9862)">Fonctionnement du</span>
<span class="t" style="left:881.5px;top:829px;font-size:16px;line-height:19px;color:#1c2f50;transform:scaleX(0.9575)">Aucune alerte (12 mois glissants)</span>
<span class="t" style="left:706.8px;top:851px;font-size:16px;line-height:19px;color:#6b778c;transform:scaleX(0.9820)">compte:</span>
<span class="t" style="left:706.8px;top:879px;font-size:16px;line-height:19px;color:#6b778c;transform:scaleX(0.9073)">Dossier de KYC:</span>
<span class="t" style="left:881.5px;top:879px;font-size:16px;line-height:19px;color:#1c2f50;transform:scaleX(0.9803)">Complet à jour</span>
<span class="t" style="left:706.8px;top:907px;font-size:16px;line-height:19px;color:#6b778c;transform:scaleX(0.9600)">Entrée en relation:</span>
<span class="t" style="left:881.5px;top:907px;font-size:16px;line-height:19px;color:#1c2f50;transform:scaleX(0.9600)">À distance</span>
<span class="t" style="left:1509.2px;top:358px;font-size:16px;line-height:19px;color:#6b778c;transform:scaleX(0.9198)">Responsable:</span>
<span class="t" style="left:1703.1px;top:358px;font-size:16px;line-height:19px;color:#1c2f50">Non attribuée</span>
<span class="t" style="left:1509.2px;top:393px;font-size:16px;line-height:19px;color:#6b778c;transform:scaleX(0.9657)">Rapporteur:</span>
<span class="t" style="left:1703.1px;top:393px;font-size:16px;line-height:19px;color:#1c2f50;transform:scaleX(0.9612)">Damien</span>
<span class="t" style="left:1672.1px;top:422px;font-size:16px;line-height:19px;color:#1c2f50;transform:scaleX(0.8640)">LAUBERTON</span>
<span class="t" style="left:1509.2px;top:452px;font-size:16px;line-height:19px;color:#6b778c;transform:scaleX(0.9225)">Gérer les</span>
<span class="t" style="left:1509.2px;top:474px;font-size:16px;line-height:19px;color:#6b778c;transform:scaleX(0.9491)">observateurs:</span>
<span class="t" style="left:1681.4px;top:453px;font-size:12.5px;line-height:16px;color:#253858;transform:scaleX(1.0643)">0</span>
<span class="t" style="left:1703.1px;top:452px;font-size:16px;line-height:19px;color:#8a1f2b;transform:scaleX(0.9781)">Démarre l'observation</span>
<span class="t" style="left:1672.1px;top:474px;font-size:16px;line-height:19px;color:#8a1f2b;transform:scaleX(0.9724)">de ce ticket</span>
<span class="t" style="left:1509.2px;top:562px;font-size:16px;line-height:19px;color:#6b778c;transform:scaleX(0.9519)">Création:</span>
<span class="t" style="left:1671.5px;top:562px;font-size:16px;line-height:19px;color:#1c2f50;transform:scaleX(0.9738)">04/10/2019 14:19</span>
<span class="t" style="left:1509.2px;top:590px;font-size:16px;line-height:19px;color:#6b778c;transform:scaleX(0.9697)">Mise à jour:</span>
<span class="t" style="left:1671.5px;top:590px;font-size:16px;line-height:19px;color:#1c2f50;transform:scaleX(0.9738)">14/10/2019 16:43</span>
<span class="t" style="left:1509.2px;top:617px;font-size:16px;line-height:19px;color:#6b778c">Date d'intégration</span>
<span class="t" style="left:1671.5px;top:617px;font-size:16px;line-height:19px;color:#1c2f50;transform:scaleX(0.9953)">04/10/2019</span>
<span class="t" style="left:1509.2px;top:639px;font-size:16px;line-height:19px;color:#6b778c;transform:scaleX(0.8800)">Seuils VROK, VRKO,</span>
<span class="t" style="left:1509.2px;top:661px;font-size:16px;line-height:19px;color:#6b778c;transform:scaleX(0.8348)">RRKO:</span>
</body>
</html>
